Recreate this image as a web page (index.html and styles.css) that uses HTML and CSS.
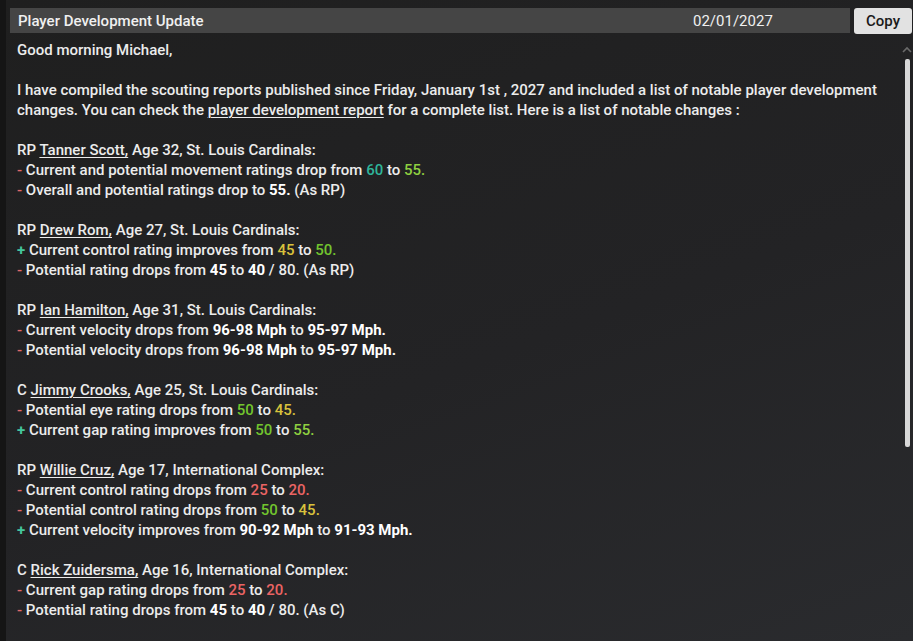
FILE: index.html
```html
<!DOCTYPE html>
<html>
<head>
<meta charset="utf-8">
<link rel="stylesheet" href="styles.css">
</head>
<body>
<div class="frame">
  <div class="panel">
    <div class="header">
      <div class="titlebar">
        <span class="title">Player Development Update</span>
        <span class="date">02/01/2027</span>
      </div>
      <button class="copy">Copy</button>
    </div>
    <div class="body">
      <div class="content">
        <p>Good morning Michael,</p>
        <p class="blank"></p>
        <p>I have compiled the scouting reports published since Friday, January 1st , 2027 and included a list of notable player development changes. You can check the <u>player development report</u> for a complete list. Here is a list of notable changes :</p>
        <p class="blank"></p>
        <p>RP <u>Tanner Scott,</u> Age 32, St. Louis Cardinals:</p>
        <p><span class="minus">-</span> Current and potential movement ratings drop from <span class="teal">60</span> to <span class="lime">55.</span></p>
        <p><span class="minus">-</span> Overall and potential ratings drop to <b>55.</b> (As RP)</p>
        <p class="blank"></p>
        <p>RP <u>Drew Rom,</u> Age 27, St. Louis Cardinals:</p>
        <p><span class="plus">+</span> Current control rating improves from <span class="yellow">45</span> to <span class="green">50.</span></p>
        <p><span class="minus">-</span> Potential rating drops from <b>45</b> to <b>40</b> / 80. (As RP)</p>
        <p class="blank"></p>
        <p>RP <u>Ian Hamilton,</u> Age 31, St. Louis Cardinals:</p>
        <p><span class="minus">-</span> Current velocity drops from <b>96-98 Mph</b> to <b>95-97 Mph.</b></p>
        <p><span class="minus">-</span> Potential velocity drops from <b>96-98 Mph</b> to <b>95-97 Mph.</b></p>
        <p class="blank"></p>
        <p>C <u>Jimmy Crooks,</u> Age 25, St. Louis Cardinals:</p>
        <p><span class="minus">-</span> Potential eye rating drops from <span class="green">50</span> to <span class="yellow">45.</span></p>
        <p><span class="plus">+</span> Current gap rating improves from <span class="green">50</span> to <span class="lime">55.</span></p>
        <p class="blank"></p>
        <p>RP <u>Willie Cruz,</u> Age 17, International Complex:</p>
        <p><span class="minus">-</span> Current control rating drops from <span class="red">25</span> to <span class="red">20.</span></p>
        <p><span class="minus">-</span> Potential control rating drops from <span class="green">50</span> to <span class="yellow">45.</span></p>
        <p><span class="plus">+</span> Current velocity improves from <b>90-92 Mph</b> to <b>91-93 Mph.</b></p>
        <p class="blank"></p>
        <p>C <u>Rick Zuidersma,</u> Age 16, International Complex:</p>
        <p><span class="minus">-</span> Current gap rating drops from <span class="red">25</span> to <span class="red">20.</span></p>
        <p><span class="minus">-</span> Potential rating drops from <b>45</b> to <b>40</b> / 80. (As C)</p>
      </div>
      <div class="scrollbar">
        <svg class="arrow" width="10" height="7" viewBox="0 0 10 7"><path d="M1 6 L5 2 L9 6" fill="none" stroke="#6a6a6a" stroke-width="1.6"/></svg>
        <div class="thumb"></div>
      </div>
    </div>
  </div>
</div>
</body>
</html>
```

FILE: styles.css
```css
html, body {
  margin: 0;
  padding: 0;
  height: 100%;
}
body {
  background: #151515;
  font-family: Roboto, "Liberation Sans", sans-serif;
  color: #ececec;
  overflow: hidden;
}
.frame {
  height: 641px;
  padding-left: 6px;
  box-sizing: border-box;
}
.panel {
  height: 100%;
  background: linear-gradient(160deg, #1f1f1f 0%, #232325 55%, #2a2b2e 100%);
  display: flex;
  flex-direction: column;
}
.header {
  display: flex;
  align-items: flex-start;
  padding-top: 8px;
  padding-left: 4px;
  gap: 4px;
  height: 34px;
  box-sizing: border-box;
}
.titlebar {
  flex: 1;
  height: 25px;
  background: #454545;
  display: flex;
  align-items: center;
  padding-left: 8px;
  font-size: 15px;
  font-weight: 500;
  color: #f0f0f0;
}
.title {
  flex: 1;
}
.date {
  width: 157px;
  font-weight: 400;
}
.copy {
  width: 58px;
  height: 26px;
  border: none;
  border-radius: 3px;
  background: #e2e2e2;
  color: #1a1a1a;
  font-family: Roboto, "Liberation Sans", sans-serif;
  font-size: 15px;
  font-weight: 500;
  padding: 0;
  margin-right: 1px;
}
.body {
  flex: 1;
  display: flex;
  min-height: 0;
}
.content {
  flex: 1;
  padding: 6px 0 0 11px;
  font-size: 15px;
  font-weight: 500;
  line-height: 20px;
  min-width: 0;
  padding-right: 18px;
}
.content p {
  margin: 0;
}
.content .blank {
  height: 20px;
}
.content u {
  text-decoration-thickness: 1px;
  text-underline-offset: 2px;
}
.content b {
  font-weight: 700;
  color: #ffffff;
}
.minus { color: #e06a6a; }
.plus { color: #45c79d; font-weight: 700; }
.teal { color: #2fb59a; }
.lime { color: #8fd040; }
.green { color: #72c52e; }
.yellow { color: #d9c23c; }
.red { color: #eb6464; }
.scrollbar {
  width: 10px;
  display: flex;
  flex-direction: column;
  align-items: center;
  padding-top: 12px;
  margin-right: 1px;
}
.arrow {
  display: block;
}
.thumb {
  margin-top: 6px;
  width: 5px;
  height: 388px;
  background: #d8d8d8;
  border-radius: 2px;
}
```
